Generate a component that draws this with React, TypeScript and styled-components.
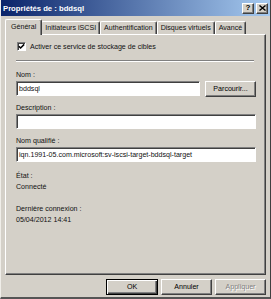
import React from 'react';
import styled, { createGlobalStyle } from 'styled-components';

const GlobalStyle = createGlobalStyle`
  html, body {
    margin: 0;
    padding: 0;
    background: #d4d0c8;
  }
  * {
    box-sizing: border-box;
  }
`;

const Window = styled.div`
  width: 271px;
  height: 299px;
  background: #d4d0c8;
  border-left: 1px solid #f0eee9;
  border-right: 1px solid #404040;
  border-bottom: 2px solid #555;
  display: flex;
  flex-direction: column;
  font-family: 'Liberation Sans', Arial, sans-serif;
  font-size: 7.1px;
  color: #111;
`;

const TitleBar = styled.div`
  height: 16px;
  display: flex;
  align-items: center;
  padding: 0 2px 0 2px;
  background: linear-gradient(to right, #0a246a, #a6caf0);
`;

const Title = styled.span`
  flex: 1;
  color: #fff;
  font-weight: bold;
  font-size: 7.7px;
`;

const CapButton = styled.button`
  width: 12px;
  height: 11px;
  margin-left: 2px;
  padding: 0;
  background: #d4d0c8;
  border: 1px solid;
  border-color: #fff #404040 #404040 #fff;
  box-shadow: inset -1px -1px 0 #808080;
  display: flex;
  align-items: center;
  justify-content: center;
  font-family: 'Liberation Sans', Arial, sans-serif;
  font-weight: bold;
  font-size: 8px;
  line-height: 1;
  color: #000;
`;

const Body = styled.div`
  flex: 1;
  display: flex;
  flex-direction: column;
  padding: 2px 4px 0 4px;
`;

const TabRow = styled.div`
  display: flex;
  align-items: flex-end;
  padding-left: 2px;
  height: 16px;
  position: relative;
  z-index: 1;
`;

const Tab = styled.div<{ $active?: boolean }>`
  height: ${(p) => (p.$active ? '16px' : '13px')};
  margin: ${(p) => (p.$active ? '0 -1px -1px -2px' : '0')};
  padding: ${(p) => (p.$active ? '3px 5px 0 5px' : '2px 3px 0 3px')};
  background: #d4d0c8;
  border: 1px solid;
  border-bottom: none;
  border-color: #fff #404040 #404040 #fff;
  box-shadow: inset -1px 0 0 #808080;
  border-radius: 2px 2px 0 0;
  white-space: nowrap;
  position: relative;
  z-index: ${(p) => (p.$active ? 2 : 0)};
`;

const Panel = styled.div`
  height: 241px;
  border: 1px solid;
  border-color: #fff #404040 #404040 #fff;
  box-shadow: inset -1px -1px 0 #808080;
  padding: 7px 10px 0 10px;
  display: flex;
  flex-direction: column;
`;

const CheckRow = styled.label`
  display: flex;
  align-items: center;
  gap: 4px;
  margin-left: 1px;
`;

const CheckBox = styled.span`
  width: 9px;
  height: 9px;
  background: #fff;
  border: 1px solid;
  border-color: #808080 #fff #fff #808080;
  box-shadow: inset 1px 1px 0 #404040;
  display: flex;
  align-items: center;
  justify-content: center;
`;

const Separator = styled.div`
  height: 2px;
  margin: 9px 1px 0 0;
  border-top: 1px solid #808080;
  border-bottom: 1px solid #fff;
`;

const FieldLabel = styled.div<{ $top: number }>`
  margin-top: ${(p) => p.$top}px;
  line-height: 9px;
  height: 9px;
`;

const FieldRow = styled.div`
  display: flex;
  gap: 5px;
  margin-top: 1px;
  margin-right: -1px;
`;

const TextBox = styled.div`
  flex: 1;
  height: 15px;
  background: #fff;
  border: 1px solid;
  border-color: #808080 #fff #fff #808080;
  box-shadow: inset 1px 1px 0 #404040;
  padding: 0 2px;
  display: flex;
  align-items: center;
  white-space: nowrap;
  overflow: hidden;
`;

const Button = styled.div<{ $default?: boolean; $disabled?: boolean }>`
  width: ${(p) => (p.$default ? '52px' : '51px')};
  height: 16px;
  background: #d4d0c8;
  border: 1px solid;
  border-color: ${(p) => (p.$default ? '#000' : '#fff #404040 #404040 #fff')};
  box-shadow: ${(p) =>
    p.$default
      ? 'inset 1px 1px 0 #fff, inset -1px -1px 0 #404040, inset -2px -2px 0 #808080'
      : 'inset -1px -1px 0 #808080'};
  display: flex;
  align-items: center;
  justify-content: center;
  color: ${(p) => (p.$disabled ? '#808080' : '#000')};
  text-shadow: ${(p) => (p.$disabled ? '1px 1px 0 #fff' : 'none')};
`;

const Value = styled.div`
  line-height: 9px;
  height: 9px;
  margin-top: 2px;
`;

const Footer = styled.div`
  display: flex;
  justify-content: flex-end;
  gap: 3px;
  margin-top: 4px;
`;

export default function App() {
  return (
    <>
      <GlobalStyle />
      <Window>
        <TitleBar>
          <Title>Propriétés de : bddsql</Title>
          <CapButton>?</CapButton>
          <CapButton>
            <svg width="7" height="6" viewBox="0 0 7 6">
              <path d="M0.5 0.5 L6.5 5.5 M6.5 0.5 L0.5 5.5" stroke="#000" strokeWidth="1.4" />
            </svg>
          </CapButton>
        </TitleBar>
        <Body>
          <TabRow>
            <Tab $active>Général</Tab>
            <Tab>Initiateurs iSCSI</Tab>
            <Tab>Authentification</Tab>
            <Tab>Disques virtuels</Tab>
            <Tab>Avancé</Tab>
          </TabRow>
          <Panel>
            <CheckRow>
              <CheckBox>
                <svg width="7" height="7" viewBox="0 0 7 7">
                  <path d="M0.8 3.2 L2.6 5 L6.2 1.4" stroke="#000" strokeWidth="1.5" fill="none" />
                </svg>
              </CheckBox>
              Activer ce service de stockage de cibles
            </CheckRow>
            <Separator />
            <FieldLabel $top={9}>Nom :</FieldLabel>
            <FieldRow>
              <TextBox>bddsql</TextBox>
              <Button>Parcourir...</Button>
            </FieldRow>
            <FieldLabel $top={7}>Description :</FieldLabel>
            <FieldRow>
              <TextBox />
            </FieldRow>
            <FieldLabel $top={8}>Nom qualifié :</FieldLabel>
            <FieldRow>
              <TextBox>iqn.1991-05.com.microsoft:sv-iscsi-target-bddsql-target</TextBox>
            </FieldRow>
            <FieldLabel $top={10}>État :</FieldLabel>
            <Value>Connecté</Value>
            <FieldLabel $top={13}>Dernière connexion :</FieldLabel>
            <Value>05/04/2012 14:41</Value>
          </Panel>
          <Footer>
            <Button $default>OK</Button>
            <Button>Annuler</Button>
            <Button $disabled>Appliquer</Button>
          </Footer>
        </Body>
      </Window>
    </>
  );
}
